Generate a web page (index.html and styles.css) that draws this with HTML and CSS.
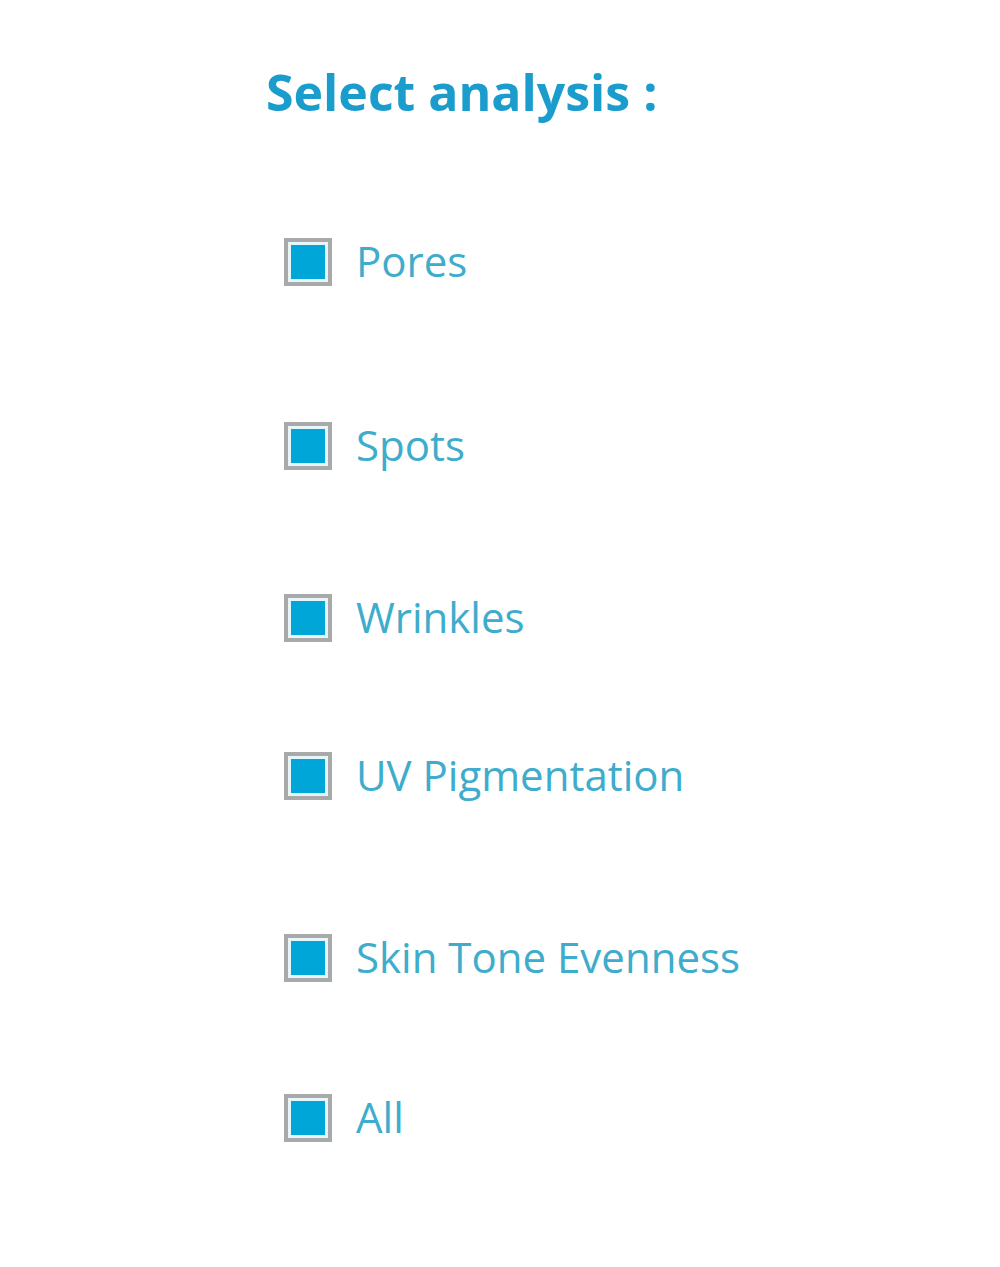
FILE: index.html
```html
<!DOCTYPE html>
<html>
<head>
<meta charset="utf-8">
<link rel="stylesheet" href="styles.css">
</head>
<body>
<div class="panel">
  <h1 class="title">Select analysis :</h1>
  <ul class="options">
    <li class="option o1"><span class="box"></span><span class="label">Pores</span></li>
    <li class="option o2"><span class="box"></span><span class="label">Spots</span></li>
    <li class="option o3"><span class="box"></span><span class="label">Wrinkles</span></li>
    <li class="option o4"><span class="box"></span><span class="label">UV Pigmentation</span></li>
    <li class="option o5"><span class="box"></span><span class="label">Skin Tone Evenness</span></li>
    <li class="option o6"><span class="box"></span><span class="label">All</span></li>
  </ul>
</div>
</body>
</html>
```

FILE: styles.css
```css
html, body {
  margin: 0;
  padding: 0;
  background: #ffffff;
}
body {
  width: 1000px;
  height: 1267px;
  overflow: hidden;
  font-family: "Open Sans", "Noto Sans", sans-serif;
}
.panel {
  padding-top: 60px;
  padding-left: 266px;
}
.title {
  margin: 0;
  font-size: 50px;
  font-weight: 700;
  color: #1a9ccc;
  line-height: 64px;
  letter-spacing: 0;
}
.options {
  list-style: none;
  margin: 0;
  padding: 0 0 0 18px;
}
.option {
  display: flex;
  align-items: center;
  height: 50px;
  gap: 24px;
}
.o1 { margin-top: 113px; }
.o2 { margin-top: 134px; }
.o3 { margin-top: 122px; }
.o4 { margin-top: 108px; }
.o5 { margin-top: 132px; }
.o6 { margin-top: 110px; }
.box {
  box-sizing: border-box;
  width: 48px;
  height: 48px;
  border: 4px solid #a9a9a9;
  padding: 3px;
  background: #e6f6fb;
}
.box::after {
  content: "";
  display: block;
  width: 100%;
  height: 100%;
  background: #00a6d8;
}
.label {
  font-size: 42px;
  color: #3eaccc;
  line-height: 50px;
  margin-top: -2px;
}
```
